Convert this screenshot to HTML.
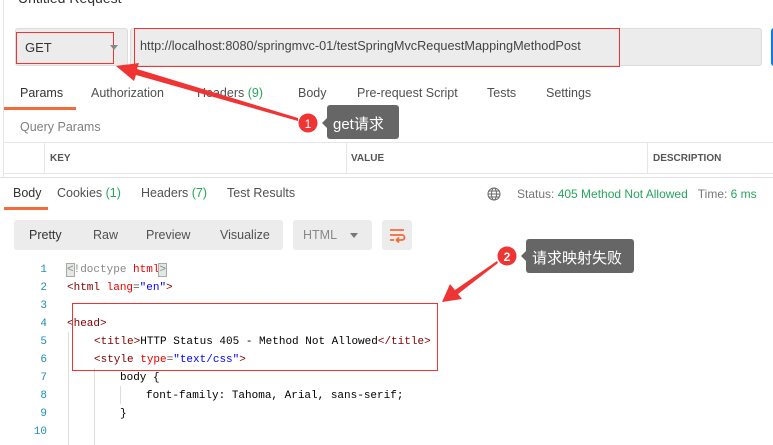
<!DOCTYPE html>
<html><head><meta charset="utf-8"><style>
*{margin:0;padding:0;box-sizing:border-box}
body{width:773px;height:445px;background:#fff;position:relative;overflow:hidden;font-family:"Liberation Sans","Noto Sans CJK SC",sans-serif;font-size:12.5px;color:#505050}
.a{position:absolute;white-space:nowrap}
.g{color:#26a65b}
.mono{font-family:"Liberation Mono",monospace;font-size:11px}
.ln{position:absolute;left:20px;width:27px;text-align:right;color:#1f8fb5;font-family:"Liberation Mono",monospace;font-size:11px}
.tag{color:#800000}.at{color:#e00}.st{color:#00f}
</style></head><body>
<div class="a" style="left:18px;top:-10px;font-size:14px;color:#333">Untitled Request</div>
<div class="a" style="left:3px;top:0;width:1px;height:177px;background:#e6e6e6"></div>
<div class="a" style="left:15px;top:28px;width:113px;height:38px;background:#ececec;border:1px solid #dcdcdc;border-radius:3px"></div>
<div class="a" style="left:16px;top:32px;width:98px;height:32px;border:1px solid #f03434"></div>
<div class="a" style="left:25px;top:40px;font-size:13px;color:#333">GET</div>
<div class="a" style="left:110px;top:45px;width:0;height:0;border-left:4px solid transparent;border-right:4px solid transparent;border-top:5px solid #888"></div>
<div class="a" style="left:130px;top:28px;width:632px;height:38px;background:#ececec;border:1px solid #dcdcdc;border-radius:3px"></div>
<div class="a" style="left:134px;top:28px;width:486px;height:39px;border:1px solid #f03434"></div>
<div class="a" style="left:140px;top:39px;font-size:12.7px;color:#444">http://localhost:8080/springmvc-01/testSpringMvcRequestMappingMethodPost</div>
<div class="a" style="left:771px;top:28px;width:10px;height:38px;background:#097bed;border-radius:3px"></div>

<div class="a" style="left:20px;top:86px;color:#333">Params</div>
<div class="a" style="left:91px;top:86px">Authorization</div>
<div class="a" style="left:197px;top:86px">Headers <span class="g">(9)</span></div>
<div class="a" style="left:298px;top:86px">Body</div>
<div class="a" style="left:357px;top:86px">Pre-request Script</div>
<div class="a" style="left:487px;top:86px">Tests</div>
<div class="a" style="left:546px;top:86px">Settings</div>
<div class="a" style="left:4px;top:107px;width:72px;height:3px;background:#f26b3a"></div>
<div class="a" style="left:20px;top:120px;color:#808080;font-size:12.5px">Query Params</div>
<div class="a" style="left:4px;top:142px;width:769px;height:1px;background:#e6e6e6"></div>
<div class="a" style="left:44px;top:142px;width:1px;height:32px;background:#e6e6e6"></div>
<div class="a" style="left:346px;top:142px;width:1px;height:32px;background:#e6e6e6"></div>
<div class="a" style="left:647px;top:142px;width:1px;height:32px;background:#e6e6e6"></div>
<div class="a" style="left:50px;top:153px;font-size:10px;font-weight:bold;color:#555">KEY</div>
<div class="a" style="left:351px;top:153px;font-size:10px;font-weight:bold;color:#555">VALUE</div>
<div class="a" style="left:653px;top:153px;font-size:10px;font-weight:bold;color:#555">DESCRIPTION</div>
<div class="a" style="left:4px;top:173px;width:769px;height:1px;background:#e6e6e6"></div>
<div class="a" style="left:0;top:177px;width:773px;height:1px;background:#e0e0e0"></div>

<div class="a" style="left:13px;top:186px;color:#333">Body</div>
<div class="a" style="left:57px;top:186px">Cookies <span class="g">(1)</span></div>
<div class="a" style="left:141px;top:186px">Headers <span class="g">(7)</span></div>
<div class="a" style="left:227px;top:186px">Test Results</div>
<div class="a" style="left:4px;top:207px;width:44px;height:3px;background:#f26b3a"></div>
<svg class="a" style="left:487px;top:187px" width="14" height="14" viewBox="0 0 14 14" fill="none" stroke="#666" stroke-width="1"><circle cx="7" cy="7" r="6"/><ellipse cx="7" cy="7" rx="2.5" ry="6"/><path d="M1 7h12M2 4h10M2 10h10"/></svg>
<div class="a" style="left:517px;top:187px;font-size:12px;color:#777">Status: <span class="g">405 Method Not Allowed</span>&nbsp;&nbsp;&nbsp;Time: <span class="g">6 ms</span></div>

<div class="a" style="left:14px;top:220px;width:269px;height:30px;background:#ececec;border-radius:3px"></div>
<div class="a" style="left:29px;top:228px;color:#333">Pretty</div>
<div class="a" style="left:93px;top:228px">Raw</div>
<div class="a" style="left:146px;top:228px">Preview</div>
<div class="a" style="left:220px;top:228px">Visualize</div>
<div class="a" style="left:293px;top:220px;width:79px;height:30px;background:#ececec;border-radius:3px"></div>
<div class="a" style="left:303px;top:228px;color:#888">HTML</div>
<div class="a" style="left:350px;top:233px;border-left:4px solid transparent;border-right:4px solid transparent;border-top:5px solid #777"></div>
<div class="a" style="left:382px;top:220px;width:30px;height:30px;background:#ececec;border-radius:3px"></div>
<svg class="a" style="left:388px;top:227px" width="18" height="16" viewBox="0 0 18 16" fill="none" stroke="#f26b3a" stroke-width="1.8"><path d="M2 3h14M2 8h12a2.5 2.5 0 0 1 0 5H9M11 10.5l-2.5 2.5 2.5 2.5M2 13h4"/></svg>

<div class="ln" style="top:264px">1</div><div class="ln" style="top:282px">2</div><div class="ln" style="top:300px">3</div><div class="ln" style="top:318px">4</div><div class="ln" style="top:336px">5</div><div class="ln" style="top:354px">6</div><div class="ln" style="top:372px">7</div><div class="ln" style="top:390px">8</div><div class="ln" style="top:408px">9</div><div class="ln" style="top:426px">10</div>
<div class="a" style="left:68px;top:332px;width:1px;height:113px;background:#ddd"></div>
<div class="a" style="left:94px;top:368px;width:1px;height:77px;background:#ddd"></div>
<div class="a" style="left:120px;top:386px;width:1px;height:18px;background:#ddd"></div>
<div class="a mono" style="left:67px;top:264px;color:#888"><span style="background:#e2e8e2;outline:1px solid #aaa">&lt;</span>!doctype <span class="at">html</span><span style="background:#e2e8e2;outline:1px solid #aaa">&gt;</span></div>
<div class="a mono" style="left:67px;top:282px"><span class="tag">&lt;html</span> <span class="at">lang</span>=<span class="st">"en"</span><span class="tag">&gt;</span></div>
<div class="a mono tag" style="left:67px;top:318px">&lt;head&gt;</div>
<div class="a mono" style="left:94px;top:336px;color:#000"><span class="tag">&lt;title&gt;</span>HTTP Status 405 - Method Not Allowed<span class="tag">&lt;/title&gt;</span></div>
<div class="a mono" style="left:94px;top:354px"><span class="tag">&lt;style</span> <span class="at">type</span>=<span class="st">"text/css"</span><span class="tag">&gt;</span></div>
<div class="a mono" style="left:120px;top:372px;color:#000">body {</div>
<div class="a mono" style="left:146px;top:390px;color:#000">font-family: Tahoma, Arial, sans-serif;</div>
<div class="a mono" style="left:120px;top:408px;color:#000">}</div>
<div class="a" style="left:72px;top:303px;width:366px;height:68px;border:1px solid #f03434"></div>

<svg class="a" style="left:0;top:0" width="773" height="445">
<polygon points="116,66 139,63 137,69 298,118 298,121 136,75 134,81" fill="#f03434"/>
<polygon points="442,302 450,284 455,290 497,261 498,263 458,294 462,299" fill="#f03434"/>
<circle cx="308" cy="123" r="9.5" fill="#f03434"/>
<text x="308" y="128" fill="#fff" font-size="12" text-anchor="middle" font-family="Liberation Sans">1</text>
<circle cx="507" cy="256" r="9.5" fill="#f03434"/>
<text x="507" y="261" fill="#fff" font-size="12" text-anchor="middle" font-family="Liberation Sans" font-weight="bold">2</text>
<rect x="327" y="105" width="72" height="34" rx="3" fill="#666"/><path d="M327 118 L322 123 L327 128 Z" fill="#666"/>
<rect x="526" y="239" width="108" height="34" rx="3" fill="#666"/><path d="M526 251 L521 256 L526 261 Z" fill="#666"/>
</svg>
<div class="a" style="left:333px;top:113px;color:#fff;font-size:15px">get请求</div>
<div class="a" style="left:532px;top:247px;color:#fff;font-size:15px">请求映射失败</div>
</body></html>
